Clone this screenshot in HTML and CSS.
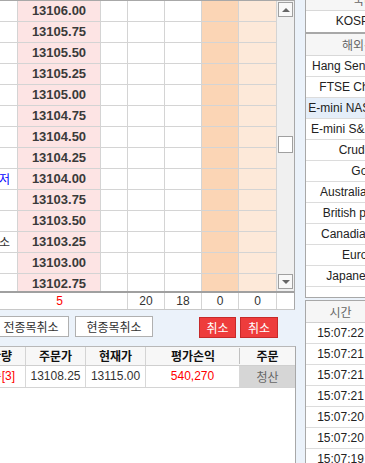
FILE: index.html
```html
<!DOCTYPE html>
<html>
  <head>
    <meta charset="utf-8">
    <title>주문 호가창</title>
    <link rel="stylesheet" href="styles.css">
  </head>
  <body>
    <div class="screen">
      <div class="left">
        <div class="book">
          <div class="book-top">
            <div class="rows">
              <div class="row"><div></div><div class="price">13106.00</div><div></div><div></div><div></div><div class="ord"></div><div class="ord2"></div></div>
              <div class="row"><div></div><div class="price">13105.75</div><div></div><div></div><div></div><div class="ord"></div><div class="ord2"></div></div>
              <div class="row"><div></div><div class="price">13105.50</div><div></div><div></div><div></div><div class="ord"></div><div class="ord2"></div></div>
              <div class="row"><div></div><div class="price">13105.25</div><div></div><div></div><div></div><div class="ord"></div><div class="ord2"></div></div>
              <div class="row"><div></div><div class="price">13105.00</div><div></div><div></div><div></div><div class="ord"></div><div class="ord2"></div></div>
              <div class="row"><div></div><div class="price">13104.75</div><div></div><div></div><div></div><div class="ord"></div><div class="ord2"></div></div>
              <div class="row"><div></div><div class="price">13104.50</div><div></div><div></div><div></div><div class="ord"></div><div class="ord2"></div></div>
              <div class="row"><div></div><div class="price">13104.25</div><div></div><div></div><div></div><div class="ord"></div><div class="ord2"></div></div>
              <div class="row"><div class="tag low">최저</div><div class="price">13104.00</div><div></div><div></div><div></div><div class="ord"></div><div class="ord2"></div></div>
              <div class="row"><div></div><div class="price">13103.75</div><div></div><div></div><div></div><div class="ord"></div><div class="ord2"></div></div>
              <div class="row"><div></div><div class="price">13103.50</div><div></div><div></div><div></div><div class="ord"></div><div class="ord2"></div></div>
              <div class="row"><div class="tag">손절취소</div><div class="price">13103.25</div><div></div><div></div><div></div><div class="ord"></div><div class="ord2"></div></div>
              <div class="row"><div></div><div class="price">13103.00</div><div></div><div></div><div></div><div class="ord"></div><div class="ord2"></div></div>
              <div class="row"><div></div><div class="price">13102.75</div><div></div><div></div><div></div><div class="ord"></div><div class="ord2"></div></div>
            </div>
            <div class="scrollbar">
              <div class="sb-btn"><span class="arrow-up"></span></div>
              <div class="sb-thumb"></div>
              <div class="sb-btn down"><span class="arrow-down"></span></div>
            </div>
          </div>
          <div class="sum">
            <div class="blank"></div>
            <div class="blank red">5</div>
            <div></div>
            <div>20</div>
            <div>18</div>
            <div>0</div>
            <div>0</div>
            <div class="blank"></div>
          </div>
        </div>

        <div class="actions">
          <button class="btn all">전종목취소</button>
          <button class="btn cur">현종목취소</button>
          <div class="cancels">
            <button class="btn-red">취소</button>
            <button class="btn-red wide">취소</button>
          </div>
        </div>

        <div class="list">
          <div class="lhead">
            <div>잔량</div>
            <div>주문가</div>
            <div>현재가</div>
            <div class="divider">평가손익</div>
            <div>주문</div>
          </div>
          <div class="lrow">
            <div class="qty red">매수[3]</div>
            <div>13108.25</div>
            <div>13115.00</div>
            <div class="red">540,270</div>
            <div class="close">청산</div>
          </div>
        </div>
      </div>

      <div class="right">
        <div class="mkt first">
          <div class="hd">국내</div>
          <div class="it">KOSPI200</div>
        </div>
        <div class="mkt overseas">
          <div class="hd">해외선물</div>
          <div class="it">Hang Seng Futures</div>
          <div class="it">FTSE China A50</div>
          <div class="it sel">E-mini NASDAQ 100</div>
          <div class="it">E-mini S&amp;P MidCap</div>
          <div class="it">Crude Oil</div>
          <div class="it">Gold</div>
          <div class="it">Australian Dollar</div>
          <div class="it">British pound fx</div>
          <div class="it">Canadian Dollar</div>
          <div class="it">Euro FX</div>
          <div class="it">Japanese Yen</div>
          <div class="it"></div>
        </div>
        <div class="ticks">
          <div class="trow thd"><div>시간</div><div>체결가</div></div>
          <div class="trow"><div>15:07:22</div><div>13115.00</div></div>
          <div class="trow"><div>15:07:21</div><div>13115.00</div></div>
          <div class="trow"><div>15:07:21</div><div>13114.75</div></div>
          <div class="trow"><div>15:07:21</div><div>13115.00</div></div>
          <div class="trow"><div>15:07:20</div><div>13115.00</div></div>
          <div class="trow"><div>15:07:20</div><div>13114.75</div></div>
          <div class="trow"><div>15:07:19</div><div>13115.00</div></div>
        </div>
      </div>
    </div>
  </body>
</html>
```

FILE: styles.css
```css
* {
  box-sizing: border-box;
}

body {
  margin: 0;
  width: 365px;
  height: 463px;
  overflow: hidden;
  background: #ebf2fa;
  font-family: "Liberation Sans", "Noto Sans CJK KR", sans-serif;
  font-size: 12px;
  color: #333;
}

.screen {
  display: flex;
  align-items: flex-start;
  margin-left: -40px;
}

.left {
  width: 336px;
  flex: none;
}

.red {
  color: #ff0000;
}

/* order book grid */
.book {
  width: 335px;
  background: #fff;
  border-top: 1px solid #a8a8a8;
  border-right: 1px solid #a8a8a8;
  border-bottom: 1px solid #c8c8c8;
}

.book-top {
  display: flex;
  height: 292px;
  border-bottom: 2px solid #a0a0a0;
}

.rows {
  width: 317px;
  overflow: hidden;
}

.row,
.sum {
  display: grid;
  grid-template-columns: 58px 83px 27px 37px 37px 37px 38px;
}

.row > div {
  height: 21px;
  border-right: 1px solid #d4d4d4;
  border-bottom: 1px solid #d4d4d4;
  line-height: 20px;
  text-align: center;
  white-space: nowrap;
  overflow: hidden;
}

.row .price {
  background: #fde4e4;
  font-size: 13px;
  font-weight: bold;
  color: #3a3a3a;
}

.row .ord {
  background: #fbd5b5;
}

.row .ord2 {
  background: #fde9d9;
}

.row .tag {
  text-align: right;
  padding-right: 7px;
  font-family: "Noto Sans CJK KR", sans-serif;
  color: #333;
}

.row .tag.low {
  color: #0000ff;
}

.scrollbar {
  width: 17px;
  height: 290px;
  background: #f0f0f0;
  display: flex;
  flex-direction: column;
  padding: 1px 1px 2px 1px;
}

.sb-btn {
  width: 15px;
  height: 15px;
  border: 1px solid #a0a0a0;
  background: #f8f8f8;
  display: flex;
  align-items: center;
  justify-content: center;
}

.sb-btn.down {
  margin-top: auto;
}

.arrow-up {
  width: 0;
  height: 0;
  border-left: 4px solid transparent;
  border-right: 4px solid transparent;
  border-bottom: 4px solid #666;
}

.arrow-down {
  width: 0;
  height: 0;
  border-left: 4px solid transparent;
  border-right: 4px solid transparent;
  border-top: 4px solid #666;
}

.sb-thumb {
  width: 15px;
  height: 17px;
  margin-top: 119px;
  border: 1px solid #a0a0a0;
  background: #fff;
}

.sum {
  grid-template-columns: 58px 83px 27px 37px 37px 37px 38px 16px;
  height: 16px;
}

.sum > div {
  border-right: 1px solid #d4d4d4;
  line-height: 16px;
  text-align: center;
}

.sum > div.blank {
  border-right: none;
}

/* buttons */
.actions {
  display: flex;
  align-items: flex-start;
  height: 36px;
  padding: 6px 18px 0 33px;
}

.btn {
  height: 21px;
  padding: 0;
  border: 1px solid #b0b0b0;
  background: #fff;
  font-family: "Noto Sans CJK KR", sans-serif;
  font-size: 12px;
  line-height: 19px;
  color: #333;
}

.btn.all {
  width: 76px;
}

.btn.cur {
  width: 78px;
  margin-left: 6px;
}

.cancels {
  display: flex;
  gap: 4px;
  margin-left: auto;
  margin-top: 1px;
}

.btn-red {
  width: 37px;
  height: 21px;
  padding: 0;
  border: 1px solid #c62a2a;
  background: #ee3c3c;
  font-family: "Noto Sans CJK KR", sans-serif;
  font-size: 12px;
  line-height: 19px;
  color: #fff;
}

.btn-red.wide {
  width: 38px;
}

/* open position list */
.list {
  width: 336px;
  height: 117px;
  background: #fff;
  border-top: 1px solid #b8b8b8;
  border-right: 1px solid #a8a8a8;
}

.lhead,
.lrow {
  display: grid;
  grid-template-columns: 66px 60px 60px 94px 55px;
}

.lhead {
  height: 19px;
  background: #f7f7f7;
  border-bottom: 1px solid #cfcfcf;
}

.lhead > div {
  font-family: "Noto Sans CJK KR", sans-serif;
  font-weight: bold;
  color: #111;
  line-height: 18px;
  text-align: center;
  border-right: 1px solid #d4d4d4;
  position: relative;
}

.lhead > div:last-child {
  border-right: none;
}

.lhead > div:first-child {
  text-align: right;
  padding-right: 13px;
}

.lhead > div.divider {
  border-right: none;
}

.lhead > div.divider::after {
  content: "";
  position: absolute;
  right: 0;
  top: 1px;
  height: 16px;
  border-right: 1px solid #c0c0c0;
}

.lrow {
  height: 22px;
  border-bottom: 1px solid #d4d4d4;
}

.lrow > div {
  line-height: 21px;
  text-align: center;
  border-right: 1px solid #d8d8d8;
  white-space: nowrap;
}

.lrow > div.qty {
  text-align: right;
  padding-right: 10px;
}

.lrow > div.close {
  border-right: none;
  background: #d6d6d6;
  color: #666;
  font-family: "Noto Sans CJK KR", sans-serif;
}

/* market list on the right */
.right {
  width: 118px;
  flex: none;
  margin-left: 9px;
  margin-top: -12px;
}

.mkt {
  background: #fff;
  border: 1px solid #a8a8a8;
}

.mkt .hd {
  height: 22px;
  line-height: 21px;
  border-bottom: 1px solid #d8d8d8;
  background: #f6f6f6;
  color: #666;
  text-align: center;
  font-family: "Noto Sans CJK KR", sans-serif;
}

.mkt .it {
  height: 21px;
  line-height: 20px;
  border-bottom: 1px solid #dcdcdc;
  text-align: center;
  white-space: nowrap;
  color: #222;
}

.mkt.first .it {
  border-bottom: none;
  line-height: 21px;
}

.mkt .it.sel {
  background: #e5eef9;
}

.mkt.overseas {
  height: 265px;
  overflow: hidden;
}

.ticks {
  margin-top: 2px;
  background: #fff;
  border: 1px solid #a8a8a8;
  border-bottom: none;
  height: 180px;
}

.trow {
  display: grid;
  grid-template-columns: 70px 1fr;
  height: 21px;
  border-bottom: 1px solid #dcdcdc;
}

.trow > div {
  line-height: 20px;
  text-align: center;
  color: #222;
  border-right: 1px solid #dcdcdc;
}

.trow.thd {
  height: 22px;
  background: #f6f6f6;
  border-bottom-color: #d0d0d0;
}

.trow.thd > div {
  line-height: 21px;
  color: #666;
  font-family: "Noto Sans CJK KR", sans-serif;
}
```
